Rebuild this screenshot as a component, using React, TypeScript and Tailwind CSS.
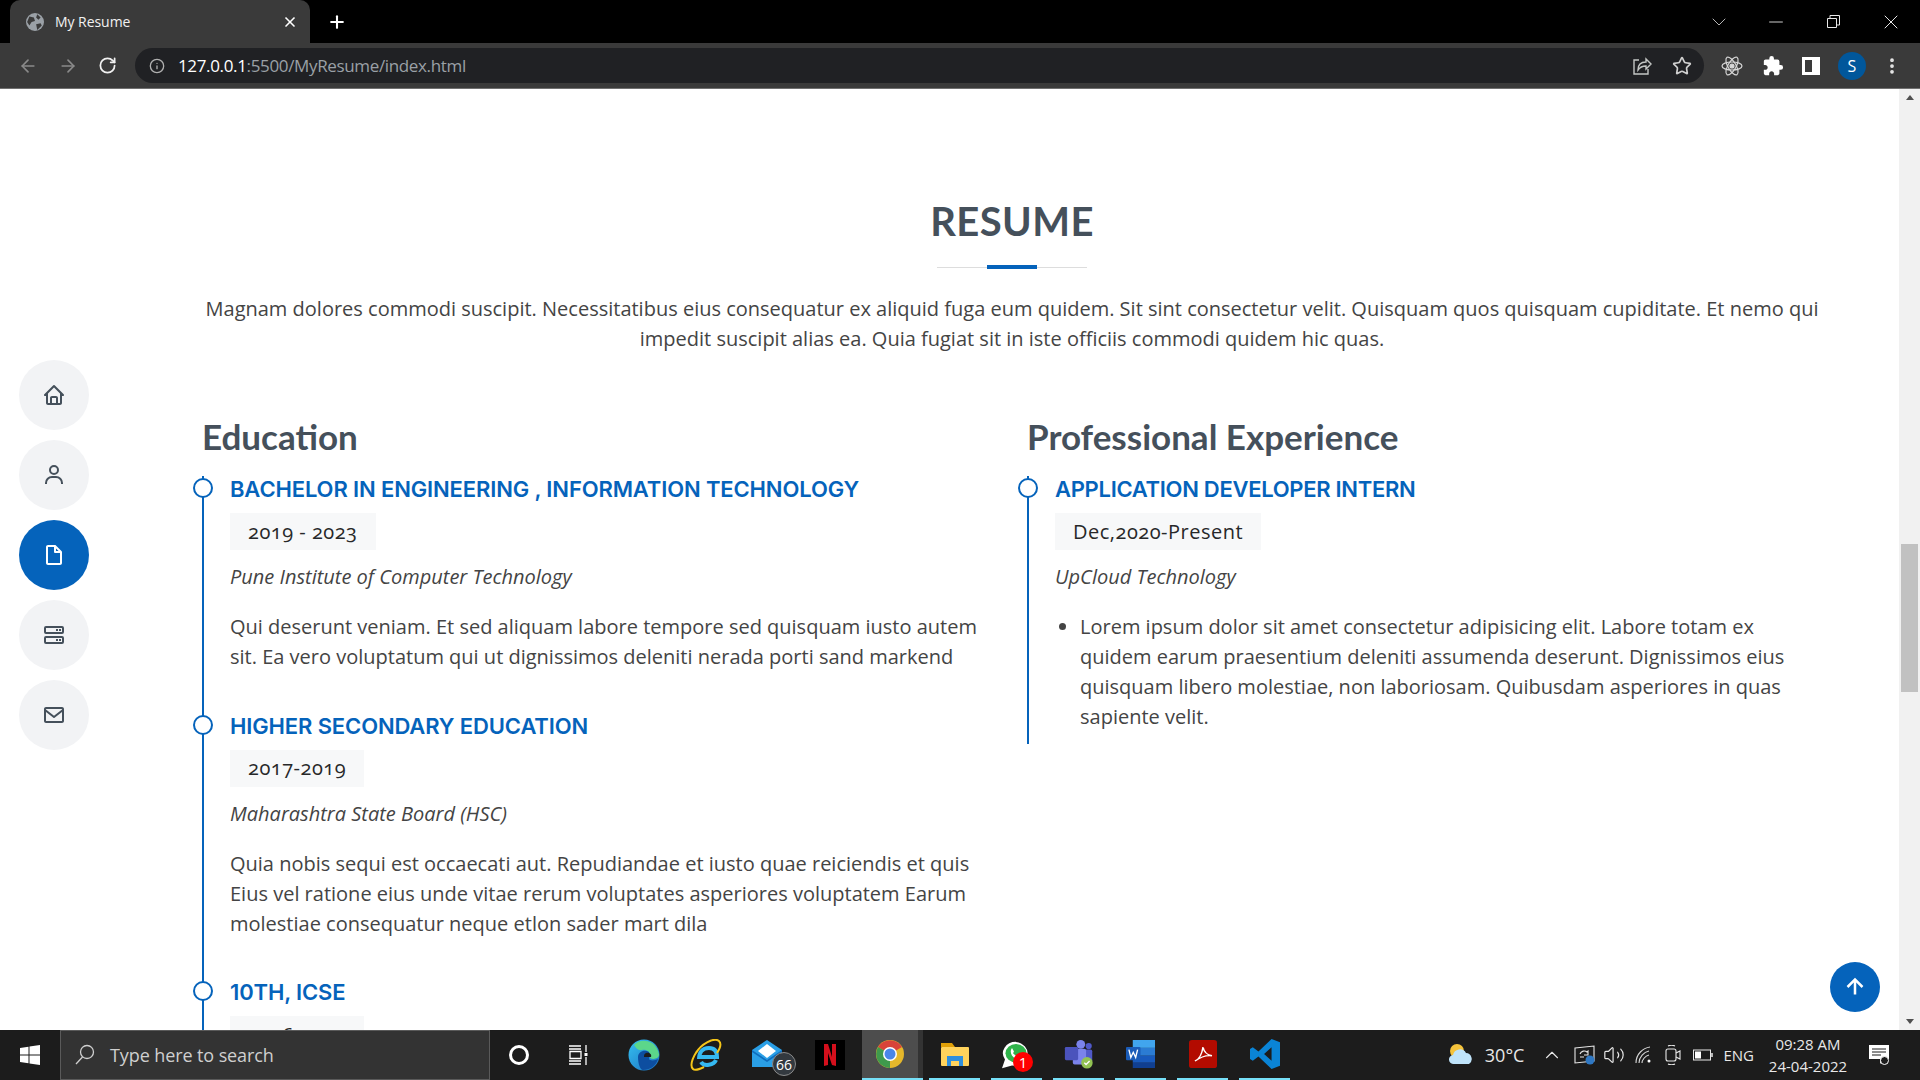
import React from "react";
import { ArrowLeft, ArrowRight, RotateCw, Info, Star, Plus, X, ChevronDown, Minus, MoreVertical, ChevronUp, Volume2 } from "lucide-react";
import { BiHome, BiUser, BiFileBlank, BiServer, BiEnvelope, BiUpArrowAlt } from "react-icons/bi";
import { MdExtension } from "react-icons/md";

const Share = () => (
  <svg width="20" height="20" viewBox="0 0 20 20" fill="none" stroke="#c4c7c5" strokeWidth="1.4">
    <path d="M7 4H2v14h14v-5" />
    <path d="M6 14c0-5 3-8 8-8V3l5 5-5 5v-3c-4 0-6 1-8 4z" />
  </svg>
);

const ReactAtom = () => (
  <svg width="22" height="22" viewBox="0 0 22 22" fill="none" stroke="#d8d8d8" strokeWidth="1.2">
    <ellipse cx="11" cy="11" rx="10" ry="4" />
    <ellipse cx="11" cy="11" rx="10" ry="4" transform="rotate(60 11 11)" />
    <ellipse cx="11" cy="11" rx="10" ry="4" transform="rotate(120 11 11)" />
    <circle cx="11" cy="11" r="2" fill="#d8d8d8" />
  </svg>
);

const Globe = () => (
  <svg width="18" height="18" viewBox="0 0 16 16">
    <circle cx="8" cy="8" r="8" fill="#9aa0a6" />
    <path d="M3 3l4 1 1 3-3 1-2 3-2-3zM10 1l3 3-2 2-2-2zM9 10l4-1 1 2-4 4z" fill="#3a3a3a" />
  </svg>
);

const WinLogo = () => (
  <svg width="20" height="20" viewBox="0 0 20 20" fill="#fff">
    <path d="M0 3l8.500-1.200v7.700H0zM9.500 1.600L20 0v9.500H9.500zM0 10.500h8.500v7.700L0 17zM9.500 10.500H20V20L9.500 18.400z" />
  </svg>
);

const SearchIcon = () => (
  <svg width="22" height="22" viewBox="0 0 22 22" fill="none" stroke="#d0d0d0" strokeWidth="1.300">
    <circle cx="13" cy="8" r="6.500" />
    <path d="M8.500 13L2 20" />
  </svg>
);

const TaskView = () => (
  <svg width="20" height="20" viewBox="0 0 20 20" fill="none" stroke="#fff" strokeWidth="1.300">
    <path d="M0 1h12M0 4h12M1 6.500h11v7H1zM0 16h12M0 19h12M17 0v7M17 12v8" />
    <rect x="15.500" y="8" width="3" height="3" fill="#fff" stroke="none" />
  </svg>
);

const Edge = () => (
  <svg width="32" height="32" viewBox="0 0 32 32">
    <defs>
      <linearGradient id="eg" x1="0" y1="0" x2="1" y2="1">
        <stop offset="0" stopColor="#35c1f1" />
        <stop offset="1" stopColor="#1b6fc0" />
      </linearGradient>
    </defs>
    <circle cx="16" cy="16" r="15.500" fill="url(#eg)" />
    <path d="M6 6C12-1 28 0 31 15c.6 5-6 6-9 4 2-5-3-9-8-8C9 12 7 7 6 6z" fill="#5cd68a" />
    <path d="M10 18c0-5 6-8 11-5 1 4-1 7 1 8 3 1 6 0 8-1-2 7-8 11-15 11-3 0-5-7-5-13z" fill="#0d4ea0" />
    <path d="M18 14c3-1 6 1 5 4h-7c0-2 0-3 2-4z" fill="#1c1c1c" />
  </svg>
);

const IE = () => (
  <svg width="32" height="32" viewBox="0 0 32 32" fill="none">
    <path d="M9 20c0-6 3-11 10-11s8 5 8 9H10M26 21c-2 5-12 7-15 2" stroke="#35b9f1" strokeWidth="4" />
    <path d="M6 14C11 5 24-2 29 2c3 3 0 9-2 12M7 12C2 20 0 27 3 30c2 2 7 0 11-2" stroke="#f5c518" strokeWidth="2" />
  </svg>
);

const Mail = () => (
  <div className="relative w-[44px] h-[36px]">
    <svg width="30" height="29" viewBox="0 0 30 29" className="absolute left-0 top-[2px]">
      <path d="M0 11L15 1l15 10v17H0z" fill="#2a9fe6" />
      <path d="M6 12l9-7 9 7-9 7z" fill="#ffffff" />
      <path d="M0 11l15 10 15-10v2L15 23 0 13z" fill="#0f6cbd" />
    </svg>
    <div className="absolute right-0 bottom-[-3px] w-[24px] h-[24px] rounded-full bg-[#33393f] border border-[#8a8a8a] flex items-center justify-center text-white text-[14px] font-['Open_Sans']">66</div>
  </div>
);

const Netflix = () => (
  <svg width="30" height="30" viewBox="0 0 30 30">
    <rect width="30" height="30" fill="#000" />
    <path d="M9 4h4l4 13V4h4v22l-4-1-4-12v12l-4 1z" fill="#d40f1c" />
  </svg>
);

const Chrome = () => (
  <svg width="28" height="28" viewBox="0 0 28 28">
    <circle cx="14" cy="14" r="14" fill="#e5b72b" />
    <path d="M14 14L2 7a14 14 0 0 1 24 0z" fill="#d8433a" />
    <path d="M14 14L2 7a14 14 0 0 0 12 21z" fill="#3f9a4c" />
    <circle cx="14" cy="14" r="7" fill="#fff" />
    <circle cx="14" cy="14" r="5.500" fill="#4a86e8" />
  </svg>
);

const Folder = () => (
  <svg width="28" height="23" viewBox="0 0 28 23">
    <path d="M0 0h11l3 4H0z" fill="#e0a008" />
    <rect y="4" width="28" height="19" rx="1" fill="#ffd35c" />
    <path d="M6 23V13h16v10h-4v-5h-8v5z" fill="#2f8fdd" />
  </svg>
);

const WhatsApp = () => (
  <div className="relative w-[31px] h-[36px] ml-[2px]">
    <svg width="28" height="28" viewBox="0 0 28 32" preserveAspectRatio="none" className="absolute left-0 top-[5px]">
      <path d="M14 1a13 13 0 0 0-11 20L0 31l10-3A13 13 0 1 0 14 1z" fill="#fff" />
      <circle cx="14" cy="14" r="10.500" fill="#2fb44a" />
      <path d="M10 8l2 4-1 2 4 4 2-1 3 2c-1 3-4 3-7 1-3-2-5-6-4-10z" fill="#fff" />
    </svg>
    <div className="absolute right-0 bottom-0 w-[20px] h-[20px] rounded-full bg-[#ff0000] flex items-center justify-center text-white text-[15px] font-['Open_Sans']">1</div>
  </div>
);

const Teams = () => (
  <svg width="30" height="30" viewBox="0 0 32 34">
    <circle cx="18" cy="6" r="5" fill="#7b83eb" />
    <circle cx="27" cy="8" r="3.500" fill="#5059c9" />
    <rect x="18" y="12" width="13" height="14" rx="2" fill="#5059c9" />
    <rect x="9" y="11" width="15" height="18" rx="2" fill="#7b83eb" />
    <rect y="9" width="15" height="15" rx="1.500" fill="#4b53bc" />
    <circle cx="25" cy="27" r="6.500" fill="#92c353" />
    <path d="M22 27l2 2 4-4" stroke="#fff" strokeWidth="1.500" fill="none" />
  </svg>
);

const Word = () => (
  <svg width="29" height="28" viewBox="0 0 30 32" preserveAspectRatio="none">
    <rect x="7" width="23" height="9" fill="#41a5ee" />
    <rect x="7" y="9" width="23" height="9" fill="#2b7cd3" />
    <rect x="7" y="18" width="23" height="8" fill="#185abd" />
    <rect x="7" y="26" width="23" height="6" fill="#103f91" />
    <rect y="8" width="15" height="15" rx="1" fill="#1a5cb8" />
    <path d="M3 11l2 9 2.500-6 2.500 6 2-9" stroke="#fff" strokeWidth="1.400" fill="none" />
  </svg>
);

const Acrobat = () => (
  <svg width="28" height="28" viewBox="0 0 28 32" preserveAspectRatio="none">
    <rect width="28" height="32" rx="3" fill="#b30b00" />
    <path d="M6 24c4-2 7-8 8-16 1 6 4 9 9 10-6-1-11 1-17 6z" stroke="#fff" strokeWidth="1.500" fill="none" />
  </svg>
);

const VSCode = () => (
  <svg width="30" height="30" viewBox="0 0 32 36" preserveAspectRatio="none">
    <path d="M23 0l9 4v28l-9 4L9 21 3 26l-3-2V12l3-2 6 5zM23 10l-8 8 8 8z" fill="#0a84d6" />
  </svg>
);

const Weather = () => (
  <svg width="26" height="22" viewBox="0 0 26 22">
    <circle cx="8" cy="7" r="7" fill="#f5c33b" />
    <path d="M5 20a4.500 4.500 0 0 1-1-9 7 7 0 0 1 13-2 6 6 0 0 1 3 11z" fill="#bfe3fa" />
  </svg>
);

const Sync = () => (
  <svg width="22" height="22" viewBox="0 0 22 22" fill="none" stroke="#e8e8e8" strokeWidth="1.100">
    <path d="M1 4l19-2v15L1 19z" />
    <path d="M6 10c1-3 5-4 7-2l1-1v4h-4M6 13h4" />
    <circle cx="16" cy="16" r="4.500" fill="#2f78c4" stroke="none" />
  </svg>
);

const Wifi = () => (
  <svg width="18" height="18" viewBox="0 0 18 18" fill="none" stroke="#d8d8d8" strokeWidth="1.100">
    <path d="M1 17C1 8 8 2 15 1M4 17c0-6 5-11 10-12M7 17c0-3 3-7 7-8" />
    <circle cx="14" cy="15" r="1.500" fill="#fff" stroke="none" />
  </svg>
);

const Video = () => (
  <svg width="16" height="20" viewBox="0 0 16 20" fill="none" stroke="#e8e8e8" strokeWidth="1.100">
    <rect x="1" y="4" width="10" height="12" rx="2" />
    <path d="M11 8l4-2v8l-4-2M3 1c2-1 5-1 7 0M3 19c2 1 5 1 7 0" />
  </svg>
);

const Battery = () => (
  <svg width="20" height="12" viewBox="0 0 20 12" fill="none" stroke="#e8e8e8" strokeWidth="1">
    <rect x=".5" y="1" width="17" height="10" />
    <rect x="2" y="2.500" width="6" height="7" fill="#fff" stroke="none" />
    <path d="M19 4v4" strokeWidth="1.500" />
  </svg>
);

const Notify = () => (
  <svg width="20" height="20" viewBox="0 0 20 20">
    <path d="M0 0h20v14h-5l-4 5v-5H0z" fill="#fff" />
    <path d="M3 4h14M3 7h14M3 10h9" stroke="#1c1c1c" strokeWidth="1" />
    <circle cx="15.500" cy="15.500" r="4" fill="#1c1c1c" stroke="#fff" strokeWidth="1" />
  </svg>
);

function BrowserChrome() {
  return (
    <div className="shrink-0">
      <div className="h-[43px] bg-black flex items-stretch">
        <div className="w-[300px] ml-[10px] bg-[#3a3a3a] rounded-t-[10px] flex items-center pl-[16px] pr-[12px] gap-[11px]">
          <Globe />
          <span className="flex-1 text-[14px] text-[#f1f1f1] font-['Open_Sans'] tracking-[-0.05px]">My Resume</span>
          <X size={16} color="#fff" strokeWidth={2.500} />
        </div>
        <div className="ml-[17px] flex items-center"><Plus size={20} color="#fff" strokeWidth={2.500} /></div>
        <div className="flex-1" />
        <div className="flex items-center">
          <ChevronDown size={24} color="#b5b5b5" strokeWidth={1} />
          <div className="w-[34px]" />
          <Minus size={22} color="#e0e0e0" strokeWidth={1} />
          <div className="w-[40px]" />
          <svg width="13" height="13" viewBox="0 0 13 13" fill="none" stroke="#e8e8e8"><path d="M.5 3.500h9v9h-9zM3 3V.500h9.500V10H10" /></svg>
          <div className="w-[39px]" />
          <X size={24} color="#e8e8e8" strokeWidth={1} />
          <div className="w-[17px]" />
        </div>
      </div>
      <div className="h-[46px] bg-[#3a3a3a] border-b border-[#707070] flex items-center">
        <div className="w-[135px] flex items-center pl-[18px] gap-[20px]">
          <ArrowLeft size={20} color="#8a8a8a" />
          <ArrowRight size={20} color="#8a8a8a" />
          <RotateCw size={19} color="#f1f1f1" strokeWidth={2.200} />
        </div>
        <div className="w-[1569px] h-[35px] bg-[#202124] rounded-full flex items-center pl-[14px] pr-[12px]">
          <Info size={16} color="#b0b0b0" strokeWidth={2} />
          <span className="ml-[13px] text-[17px] font-['Open_Sans'] tracking-[-0.35px] text-[#9aa0a6]"><span className="text-white">127.0.0.1</span>:5500/MyResume/index.html</span>
          <div className="flex-1" />
          <Share />
          <div className="w-[20px]" />
          <Star size={20} color="#d0d0d0" strokeWidth={2} />
        </div>
        <div className="flex items-center">
          <div className="w-[17px]" />
          <ReactAtom />
          <div className="w-[19px]" />
          <MdExtension size={22} color="#fff" />
          <div className="w-[18px]" />
          <div className="w-[18px] h-[18px] border-[3px] border-white bg-[#3a3a3a] border-r-[8px]" />
          <div className="w-[18px]" />
          <div className="w-[28px] h-[28px] rounded-full bg-[#01579b] text-white text-[16px] flex items-center justify-center font-['Open_Sans']">S</div>
          <div className="w-[16px]" />
          <MoreVertical size={20} color="#e8e8e8" strokeWidth={2.500} />
        </div>
      </div>
    </div>
  );
}

const tagCls = "inline-flex items-center h-[37px] px-[18px] bg-[#f7f8f9] font-['Open_Sans'] oldstyle-nums font-medium text-[20px] tracking-[0.5px] text-[#272829] align-top";

function Item({ title, tag, org, text }: { title: string; tag: string; org: string; text: string }) {
  return (
    <div className="relative border-l-2 border-[#0563bb] pl-[26px] pb-[40.5px]">
      <div className="absolute left-[-11px] top-[2px] w-[20px] h-[20px] rounded-full bg-white border-2 border-[#0563bb]" />
      <h4 className="font-['Inter'] font-semibold text-[22px] leading-[26px] text-[#0563bb] mb-[11px] tracking-[-0.13px]">{title}</h4>
      <div className={tagCls}>{tag}</div>
      {org && <div className="mt-[12px] font-['Open_Sans'] italic text-[20px] leading-[30px] text-[#444]">{org}</div>}
      {text && <p className="mt-[20px] font-['Open_Sans'] text-[20px] leading-[30px] text-[#444]">{text}</p>}
    </div>
  );
}

const nav = [
  { I: BiHome, a: false },
  { I: BiUser, a: false },
  { I: BiFileBlank, a: true },
  { I: BiServer, a: false },
  { I: BiEnvelope, a: false },
];

function Page() {
  return (
    <div className="relative flex-1 min-h-0 flex bg-white overflow-hidden">
      <div className="flex-1 min-w-0 pl-[202px] pr-[77px] pt-[108px]">
        <h2 className="text-center font-['Lato'] font-bold text-[40px] leading-[48px] tracking-[0.4px] text-[#45505b]">RESUME</h2>
        <div className="mt-[20px] mx-auto w-[150px] h-[4px] relative flex justify-center">
          <div className="absolute left-0 right-0 top-[2px] h-px bg-[#dddddd]" />
          <div className="relative w-[50px] h-[4px] bg-[#0563bb]" />
        </div>
        <p className="mt-[25px] text-center font-['Open_Sans'] text-[20px] leading-[30px] text-[#444]">
          Magnam dolores commodi suscipit. Necessitatibus eius consequatur ex aliquid fuga eum quidem. Sit sint consectetur velit. Quisquam quos quisquam cupiditate. Et nemo qui impedit suscipit alias ea. Quia fugiat sit in iste officiis commodi quidem hic quas.
        </p>
        <div className="mt-[62px] grid grid-cols-[825px_795px]">
          <div className="pr-[30px]">
            <h3 className="font-['Lato'] font-bold text-[35px] leading-[40px] text-[#45505b] mb-[20px]">Education</h3>
            <Item title="BACHELOR IN ENGINEERING , INFORMATION TECHNOLOGY" tag="2019 - 2023" org="Pune Institute of Computer Technology" text="Qui deserunt veniam. Et sed aliquam labore tempore sed quisquam iusto autem sit. Ea vero voluptatum qui ut dignissimos deleniti nerada porti sand markend" />
            <Item title="HIGHER SECONDARY EDUCATION" tag="2017-2019" org="Maharashtra State Board (HSC)" text="Quia nobis sequi est occaecati aut. Repudiandae et iusto quae reiciendis et quis Eius vel ratione eius unde vitae rerum voluptates asperiores voluptatem Earum molestiae consequatur neque etlon sader mart dila" />
            <Item title="10TH, ICSE" tag="2016-2017" org="" text="" />
          </div>
          <div className="pr-[30px]">
            <h3 className="font-['Lato'] font-bold text-[35px] leading-[40px] text-[#45505b] mb-[20px]">Professional Experience</h3>
            <div className="relative border-l-2 border-[#0563bb] pl-[26px] pb-[12px]">
              <div className="absolute left-[-11px] top-[2px] w-[20px] h-[20px] rounded-full bg-white border-2 border-[#0563bb]" />
              <h4 className="font-['Inter'] font-semibold text-[22px] leading-[26px] text-[#0563bb] mb-[11px] tracking-[-0.3px]">APPLICATION DEVELOPER INTERN</h4>
              <div className={tagCls}>Dec,2020-Present</div>
              <div className="mt-[12px] font-['Open_Sans'] italic text-[20px] leading-[30px] text-[#444]">UpCloud Technology</div>
              <ul className="mt-[20px] pl-[25px] list-disc font-['Open_Sans'] text-[20px] leading-[30px] text-[#444]">
                <li>Lorem ipsum dolor sit amet consectetur adipisicing elit. Labore totam ex quidem earum praesentium deleniti assumenda deserunt. Dignissimos eius quisquam libero molestiae, non laboriosam. Quibusdam asperiores in quas sapiente velit.</li>
              </ul>
            </div>
          </div>
        </div>
      </div>

      <div className="w-[21px] shrink-0 bg-[#f1f1f1] flex flex-col items-center relative">
        <div className="h-[17px] flex items-center justify-center">
          <div className="w-0 h-0 border-x-[4px] border-x-transparent border-b-[5px] border-b-[#505050]" />
        </div>
        <div className="mt-[438px] w-[17px] h-[148px] bg-[#c1c1c1]" />
        <div className="flex-1" />
        <div className="h-[17px] flex items-center justify-center">
          <div className="w-0 h-0 border-x-[4px] border-x-transparent border-t-[5px] border-t-[#505050]" />
        </div>
      </div>

      <div className="absolute left-[19px] top-[271px] flex flex-col gap-[10px]">
        {nav.map(({ I, a }, i) => (
          <div key={i} className={a ? "w-[70px] h-[70px] rounded-full bg-[#0563bb] text-white flex items-center justify-center" : "w-[70px] h-[70px] rounded-full bg-[#f2f3f5] text-[#45505b] flex items-center justify-center"}>
            <I size={24} />
          </div>
        ))}
      </div>

      <div className="absolute left-[1830px] top-[873px] w-[50px] h-[50px] rounded-full bg-[#0563bb] flex items-center justify-center text-white">
        <BiUpArrowAlt size={30} />
      </div>
    </div>
  );
}

function Taskbar() {
  const cell = "w-[51px] h-full flex items-center justify-center border-b-[2px] border-[#76e0f8]";
  return (
    <div className="h-[50px] shrink-0 bg-[#1c1c1c] flex items-stretch">
      <div className="w-[60px] flex items-center justify-center"><WinLogo /></div>
      <div className="w-[430px] bg-[#333333] border border-[#5a5a5a] flex items-center pl-[13px] gap-[14px]">
        <SearchIcon />
        <span className="font-['Open_Sans'] text-[18px] tracking-[-0.1px] text-[#cfcfcf]">Type here to search</span>
      </div>
      <div className="w-[58px] flex items-center justify-center"><div className="w-[20px] h-[20px] rounded-full border-[3px] border-white" /></div>
      <div className="w-[62px] flex items-center justify-center"><TaskView /></div>
      <div className="w-[68px] flex items-center justify-center"><Edge /></div>
      <div className="w-[56px] flex items-center justify-center"><IE /></div>
      <div className="w-[68px] flex items-center justify-end pr-[6px]"><Mail /></div>
      <div className="w-[56px] flex items-center justify-center"><Netflix /></div>
      <div className="ml-[4px] w-[61px] flex items-stretch border-b-[2px] border-[#76e0f8]">
        <div className="w-[56px] bg-[#4d4d4d] flex items-center justify-center"><Chrome /></div>
        <div className="w-[5px] bg-[#333333]" />
      </div>
      <div className="ml-[6px] flex gap-[11px]">
        <div className={cell}><Folder /></div>
        <div className={cell}><WhatsApp /></div>
        <div className={cell}><Teams /></div>
        <div className={cell}><Word /></div>
        <div className={cell}><Acrobat /></div>
        <div className={cell}><VSCode /></div>
      </div>
      <div className="flex-1" />
      <div className="flex items-center text-[#e8e8e8] font-['Open_Sans'] text-[15px] whitespace-nowrap">
        <Weather />
        <span className="ml-[10px] text-[18px]">30°C</span>
        <ChevronUp size={22} color="#e8e8e8" strokeWidth={1.200} className="ml-[17px]" />
        <div className="w-[11px]" />
        <Sync />
        <div className="w-[7px]" />
        <Volume2 size={22} color="#e8e8e8" strokeWidth={1.300} />
        <div className="w-[10px]" />
        <Wifi />
        <div className="w-[12px]" />
        <Video />
        <div className="w-[12px]" />
        <Battery />
        <span className="ml-[10px]">ENG</span>
        <div className="ml-[14px] w-[80px] text-center leading-[22px]">
          <div>09:28 AM</div>
          <div>24-04-2022</div>
        </div>
        <div className="w-[21px]" />
        <Notify />
        <div className="w-[31px]" />
      </div>
    </div>
  );
}

export default function App() {
  return (
    <div className="w-[1920px] h-[1080px] flex flex-col overflow-hidden">
      <BrowserChrome />
      <Page />
      <Taskbar />
    </div>
  );
}
